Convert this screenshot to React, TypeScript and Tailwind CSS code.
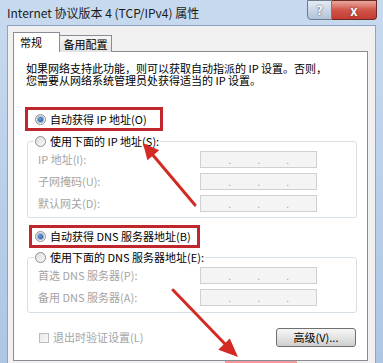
import React from "react";

function Radio({ checked }: { checked?: boolean }) {
  return (
    <span className="flex h-[11px] w-[11px] shrink-0 items-center justify-center rounded-full border border-[#8f8f8f] bg-gradient-to-br from-[#dcdcdc] to-[#fbfbfb]">
      {checked && (
        <span className="h-[5px] w-[5px] rounded-full bg-[radial-gradient(circle_at_40%_40%,#6aa6e6,#0f3c7c)] ring-1 ring-[#8fb2dc]" />
      )}
    </span>
  );
}

function IpBox() {
  return (
    <div className="flex h-[17px] w-[117px] items-center border border-[#d0d0d0] bg-[#f4f4f4] text-[10px] leading-[10px] text-[#a8a8a8]">
      <span className="w-[30px] text-right">.</span>
      <span className="w-[29px] text-right">.</span>
      <span className="w-[29px] text-right">.</span>
    </div>
  );
}

function Group({ legend, labels, className }: { legend: string; labels: string[]; className: string }) {
  return (
    <fieldset className={`ml-[13px] w-[330px] rounded-[3px] border border-[#d5dfe5] p-0 ${className}`}>
      <legend className="ml-[6px] flex h-[14px] items-center gap-[4px] bg-white px-[1px] text-[11px] leading-[14px] text-black">
        <Radio />
        <span>{legend}</span>
      </legend>
      <div className="grid grid-cols-[162px_117px] gap-y-[5px] pl-[10px] pt-[3px]">
        {labels.map((l) => (
          <React.Fragment key={l}>
            <span className="flex h-[17px] items-center text-[11px] text-[#a4a4a4]">{l}</span>
            <IpBox />
          </React.Fragment>
        ))}
      </div>
    </fieldset>
  );
}

export default function App() {
  return (
    <div className="relative h-[363px] w-[383px] overflow-hidden bg-gradient-to-b from-[#c8daef] to-[#adc6e4] font-['Noto_Sans_CJK_SC',sans-serif]">
      {/* title bar */}
      <div className="flex h-[25px] items-start justify-between">
        <span className="pl-[7px] pt-[5px] text-[12px] leading-[16px] text-[#1b1b1b]">
          Internet 协议版本 4 (TCP/IPv4) 属性
        </span>
        <div className="mr-[6px] flex">
          <div className="flex h-[20px] w-[25px] items-center justify-center rounded-bl-[4px] border border-[#6d7b8f] bg-gradient-to-b from-[#e4ebf4] to-[#b2c3d8] text-[12px] font-bold text-white [text-shadow:0_0_2px_#334]">
            ?
          </div>
          <div className="flex h-[20px] w-[45px] items-center justify-center rounded-br-[4px] border border-l-0 border-[#6b2a24] bg-gradient-to-b from-[#e9a89d] via-[#d0554a] to-[#c43b30] text-[13px] font-bold leading-none text-white [text-shadow:0_0_2px_#6a1a14]">
            x
          </div>
        </div>
      </div>

      {/* client area */}
      <div className="ml-[7px] h-[338px] w-[369px] border-x border-t border-[#8ea3bf] bg-[#f0f0f0]">
        <div className="mt-[6px] flex h-[20px] items-end pl-[5px]">
          <div className="relative z-10 flex h-[20px] w-[47px] items-center border-x border-t border-[#898c95] bg-white pl-[6px] text-[11px] text-black">
            常规
          </div>
          <div className="flex h-[17px] w-[52px] items-center justify-center border-r border-t border-[#898c95] bg-gradient-to-b from-[#f6f6f6] to-[#e2e2e2] text-[11px] text-black">
            备用配置
          </div>
        </div>

        <div className="-mt-px ml-[5px] h-[310px] w-[355px] border border-[#898c95] bg-white">
          <p className="ml-[12px] mt-[10px] text-[11px] leading-[12px] text-black">
            如果网络支持此功能，则可以获取自动指派的 IP 设置。否则，
            <br />
            您需要从网络系统管理员处获得适当的 IP 设置。
          </p>

          <div className="ml-[11px] mt-[21px] flex h-[24px] w-[138px] items-center gap-[4px] border-[3px] border-[#c0272d] pl-[7px] text-[11px] text-black">
            <Radio checked />
            自动获得 IP 地址(O)
          </div>

          <Group
            className="mt-[3px] pb-[5px]"
            legend="使用下面的 IP 地址(S):"
            labels={["IP 地址(I):", "子网掩码(U):", "默认网关(D):"]}
          />

          <div className="ml-[15px] mt-[7px] flex h-[23px] w-[171px] items-center gap-[4px] border-[3px] border-[#c0272d] pl-[3px] text-[11px] text-black">
            <Radio checked />
            自动获得 DNS 服务器地址(B)
          </div>

          <Group
            className="mt-[2px] pb-[6px]"
            legend="使用下面的 DNS 服务器地址(E):"
            labels={["首选 DNS 服务器(P):", "备用 DNS 服务器(A):"]}
          />

          <div className="ml-[25px] mr-[11px] mt-[15px] flex h-[19px] items-center justify-between">
            <div className="flex items-center gap-[4px] text-[11px] text-[#a4a4a4]">
              <span className="h-[10px] w-[10px] border border-[#bcbcbc] bg-gradient-to-br from-[#e8e8e8] to-[#fafafa]" />
              退出时验证设置(L)
            </div>
            <button className="flex h-[19px] w-[80px] items-center justify-center rounded-[3px] border border-[#707070] bg-gradient-to-b from-[#f6f6f6] via-[#e4e4e4] to-[#cfcfcf] text-[11px] text-black">
              高级(V)...
            </button>
          </div>
        </div>
      </div>

      {/* annotation overlays */}
      <div className="absolute left-[225px] top-[361px] h-[2px] w-[72px] bg-[#f29a9a]" />
      <svg className="pointer-events-none absolute inset-0" width="383" height="363" viewBox="0 0 383 363">
        <line x1="195" y1="205" x2="152" y2="154" stroke="#d42a24" strokeWidth="3" strokeLinecap="round" />
        <polygon points="143,143 159.2,150.2 147.4,160.2" fill="#d42a24" />
        <line x1="173" y1="290" x2="226" y2="345" stroke="#d42a24" strokeWidth="3" strokeLinecap="round" />
        <polygon points="238,357 218.3,349.7 229.8,338.6" fill="#d42a24" />
      </svg>
    </div>
  );
}
